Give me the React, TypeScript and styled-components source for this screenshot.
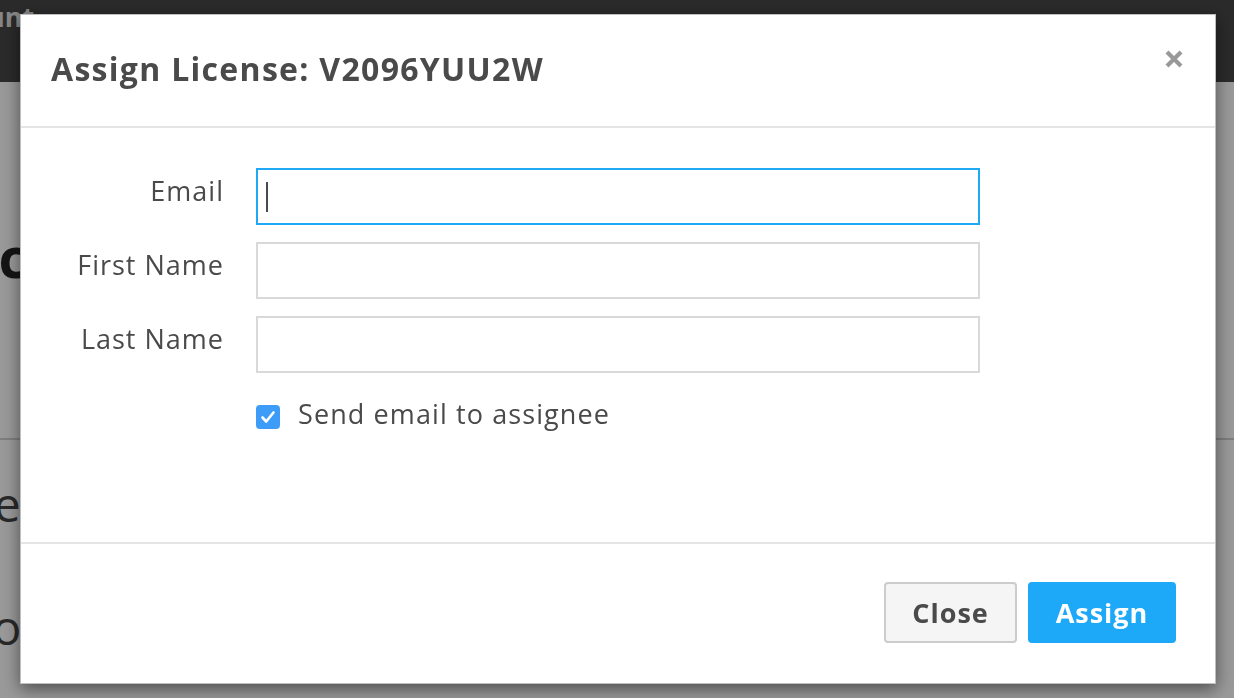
import React from 'react'
import styled, { createGlobalStyle } from 'styled-components'

const Global = createGlobalStyle`
  html, body {
    margin: 0;
    padding: 0;
    background: #fff;
    font-family: "Open Sans", "Liberation Sans", sans-serif;
    color: #4a4a4a;
    overflow: hidden;
  }
  * { box-sizing: border-box; }
`

const fields = [
  { label: 'Email', focused: true },
  { label: 'First Name', focused: false },
  { label: 'Last Name', focused: false },
]

export default function App() {
  return (
    <>
      <Global />
      <S.Page>
        <S.TopBar>
          <S.BarTitle>Account</S.BarTitle>
        </S.TopBar>
        <S.Content>
          <S.Heading>Basic</S.Heading>
          <S.Rule />
          <S.Line $shift={-86}>Type</S.Line>
          <S.Line $shift={-56} $gap={67}>Pro</S.Line>
        </S.Content>
      </S.Page>

      <S.Backdrop>
        <S.Modal>
          <S.Header>
            <S.Title>Assign License: V2096YUU2W</S.Title>
            <S.CloseX aria-label="close">
              <svg width="20" height="20" viewBox="0 0 20 20">
                <path
                  d="M3 3 L17 17 M17 3 L3 17"
                  stroke="#999"
                  strokeWidth="4.2"
                  strokeLinecap="butt"
                />
              </svg>
            </S.CloseX>
          </S.Header>

          <S.Body>
            <S.Form>
              {fields.map(f => (
                <React.Fragment key={f.label}>
                  <S.Label>{f.label}</S.Label>
                  <S.Field>
                    <S.Input $focused={f.focused} readOnly />
                    {f.focused && <S.Caret />}
                  </S.Field>
                </React.Fragment>
              ))}
              <span />
              <S.CheckRow>
                <S.Check>
                  <svg width="24" height="24" viewBox="0 0 24 24">
                    <path
                      d="M6.5 12.5 L10.2 16.5 L17.5 7.5"
                      stroke="#fff"
                      strokeWidth="2.6"
                      fill="none"
                      strokeLinecap="round"
                      strokeLinejoin="round"
                    />
                  </svg>
                </S.Check>
                Send email to assignee
              </S.CheckRow>
            </S.Form>
          </S.Body>

          <S.Footer>
            <S.Button>Close</S.Button>
            <S.Button $primary>Assign</S.Button>
          </S.Footer>
        </S.Modal>
      </S.Backdrop>
    </>
  )
}

const S = {
  Page: styled.div`
    width: 1234px;
    height: 698px;
    background: #fff;
    overflow: hidden;
  `,

  TopBar: styled.div`
    height: 82px;
    background: #474747;
    padding-top: 2px;
  `,

  BarTitle: styled.div`
    margin-left: -76px;
    font-size: 27px;
    font-weight: 700;
    color: #e0e0e0;
    line-height: 30px;
  `,

  Content: styled.div`
    padding-top: 142px;
  `,

  Heading: styled.h1`
    margin: 0 0 0 -118px;
    font-size: 56px;
    font-weight: 700;
    color: #222;
    line-height: 64px;
  `,

  Rule: styled.div`
    margin-top: 150px;
    height: 2px;
    background: #d2d2d2;
  `,

  Line: styled.div<{ $shift: number; $gap?: number }>`
    font-size: 48px;
    color: #444;
    line-height: 56px;
    margin-left: ${p => p.$shift}px;
    margin-top: ${p => p.$gap ?? 36}px;
  `,

  Backdrop: styled.div`
    position: fixed;
    inset: 0;
    background: rgba(0, 0, 0, 0.4);
    padding: 14px 0 0 20px;
  `,

  Modal: styled.div`
    width: 1196px;
    height: 670px;
    background: #fff;
    border: 1px solid rgba(0, 0, 0, 0.25);
    box-shadow: 0 5px 16px rgba(0, 0, 0, 0.5);
    display: flex;
    flex-direction: column;
  `,

  Header: styled.div`
    height: 113px;
    border-bottom: 2px solid #e5e5e5;
    display: flex;
    align-items: flex-start;
    justify-content: space-between;
    padding: 34px 31px 0 30px;
  `,

  Title: styled.h4`
    margin: 0;
    font-size: 32px;
    line-height: 40px;
    font-weight: 700;
    color: #4a4a4a;
    letter-spacing: 1.3px;
  `,

  CloseX: styled.button`
    border: none;
    background: none;
    padding: 0;
    width: 20px;
    height: 20px;
    margin-top: 0;
    display: flex;
    cursor: pointer;
  `,

  Body: styled.div`
    flex: 1;
    padding: 40px 0 0 0;
    border-bottom: 2px solid #e5e5e5;
  `,

  Form: styled.div`
    display: grid;
    grid-template-columns: 203px 724px;
    column-gap: 32px;
    row-gap: 17px;
  `,

  Label: styled.label`
    text-align: right;
    font-size: 27px;
    line-height: 36px;
    padding-top: 5px;
    letter-spacing: 1px;
    color: #4a4a4a;
  `,

  Field: styled.div`
    position: relative;
  `,

  Input: styled.input<{ $focused?: boolean }>`
    display: block;
    width: 100%;
    height: 57px;
    border: 2px solid ${p => (p.$focused ? '#1ea8f5' : '#d9d9d9')};
    background: #fff;
    outline: none;
    font: inherit;
  `,

  Caret: styled.span`
    position: absolute;
    left: 10px;
    top: 14px;
    width: 2px;
    height: 30px;
    background: #4a4a4a;
  `,

  CheckRow: styled.label`
    display: flex;
    align-items: center;
    gap: 18px;
    margin-top: 6px;
    font-size: 27px;
    line-height: 36px;
    letter-spacing: 1.1px;
    color: #4a4a4a;
  `,

  Check: styled.span`
    width: 24px;
    height: 24px;
    margin-top: 6px;
    border-radius: 4px;
    background: #3d9cf7;
    display: flex;
    align-items: center;
    justify-content: center;
  `,

  Footer: styled.div`
    height: 139px;
    display: flex;
    justify-content: flex-end;
    align-items: flex-start;
    gap: 11px;
    padding: 38px 39px 0 0;
  `,

  Button: styled.button<{ $primary?: boolean }>`
    height: 61px;
    padding: 0 20px;
    min-width: ${p => (p.$primary ? '148px' : '133px')};
    border-radius: 4px;
    font-family: inherit;
    font-size: 27px;
    font-weight: 700;
    letter-spacing: 1px;
    cursor: pointer;
    border: 2px solid ${p => (p.$primary ? '#1ea8f8' : '#cccccc')};
    background: ${p => (p.$primary ? '#1ea8f8' : '#f5f5f5')};
    color: ${p => (p.$primary ? '#fff' : '#4a4a4a')};
  `,
}
